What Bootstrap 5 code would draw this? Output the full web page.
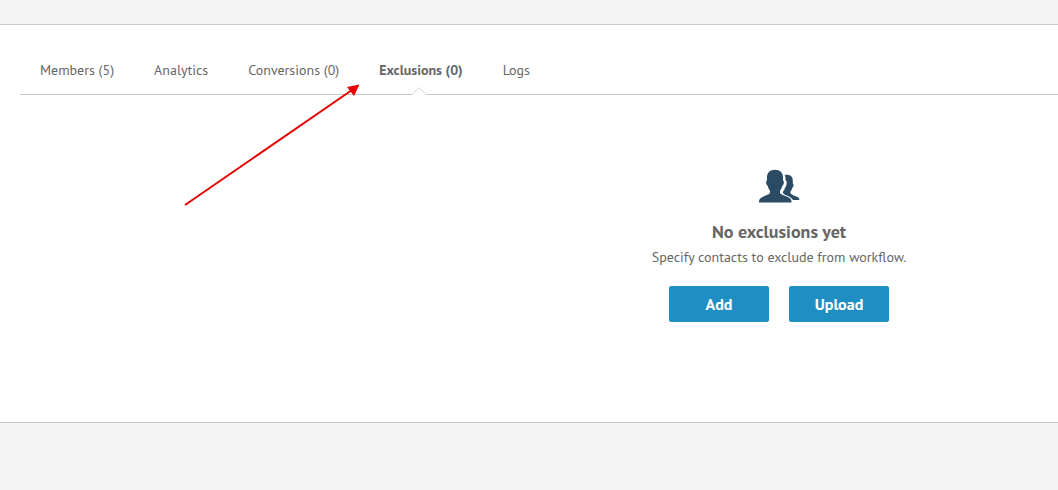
<!DOCTYPE html>
<html lang="en">
<head>
<meta charset="utf-8">
<meta name="viewport" content="width=device-width, initial-scale=1">
<title>Workflow exclusions</title>
<link href="https://cdn.jsdelivr.net/npm/bootstrap@5.3.0/dist/css/bootstrap.min.css" rel="stylesheet">
<style>
  body { background: #f3f3f3; color: #666; font: 14px/20px "PT Sans", "Noto Sans", sans-serif; overflow-x: hidden; }
  .sheet { margin-top: 24px; border-top: 1px solid #c8c8c8; border-bottom: 1px solid #c8c8c8; padding: 35px 0 100px 20px; }
  .tabs { border-bottom: 1px solid #c8c8c8; padding: 0 20px; column-gap: 40px; }
  .tabs .nav-link { color: #666; font-size: 14px; padding: 0 0 14px; }
  .tabs .nav-link.active { font-weight: 700; position: relative; }
  .caret { position: absolute; left: 50%; bottom: -1px; margin-left: -10px; }
  .empty { padding: 74px 0 0 calc(50% - 39px); }
  .empty h1 { font-size: 18px; line-height: 24px; font-weight: 700; margin: 17px 0 3px; }
  .empty p { margin: 0 0 19px; }
  .action { --bs-btn-bg: #1f8fc3; --bs-btn-border-color: #1f8fc3; --bs-btn-hover-bg: #1a7dab; --bs-btn-font-weight: 700; --bs-btn-font-size: 16px; --bs-btn-border-radius: 2px; width: 100px; height: 36px; padding: 0; }
  .actions { gap: 20px; }
  .pointer { position: absolute; left: 184px; top: 84px; pointer-events: none; }
</style>
</head>
<body>
<main class="sheet bg-white">
  <nav class="nav tabs" aria-label="Workflow">
    <a class="nav-link" href="#members">Members (5)</a>
    <a class="nav-link" href="#analytics">Analytics</a>
    <a class="nav-link" href="#conversions">Conversions (0)</a>
    <a class="nav-link active" href="#exclusions" aria-current="page">Exclusions (0)
      <svg class="caret" width="16" height="9" viewBox="0 0 16 9" aria-hidden="true"><path d="M1 9 8 1.500 15 9z" fill="#fff"/><path d="M1 8.500 8 1.500l7 7" fill="none" stroke="#d5d5d5"/></svg>
    </a>
    <a class="nav-link" href="#logs">Logs</a>
  </nav>
  <section class="empty text-center">
    <svg class="d-block mx-auto" width="42" height="34" viewBox="0 0 42 34" fill="#2b4a63" aria-hidden="true">
      <path d="M17 .8c5 0 8 3 8 7.700v3c.8.3 1 1.200.8 2.500-.3 1.500-.8 2.500-1.600 3C23.800 19 23 20.500 22 21.500v2.500c1 2 9.500 3.500 11 6.500.6 1.200.5 2 .5 3H1c0-1 0-2 .5-3C3 27.500 11 26 12 24v-2.500C11 20.500 10.200 19 9.800 17c-.8-.5-1.300-1.500-1.600-3-.2-1.300 0-2.200.8-2.500v-3C9 3.800 12 .8 17 .8z"/>
      <path d="M26.500 6c5-1 8.300 1.200 8.300 5.500v3c.7.3.9 1 .7 2-.2 1.300-.7 2-1.300 2.500-.2 1.200-.8 2.500-1.700 3.300v2c1 2 7 3 8.200 4.700.6.8.6 1.300.6 2H35c-1.500-3.200-7.500-4.500-9.800-6.500-.4-.8-.4-1.500 0-2.200 1-1 1.600-2.300 1.800-3.600 1.400-1.500 2-3.700 1.500-6.200-.2-.6-.5-1-1-1.500.1-2-.1-3.600-1-5z"/>
    </svg>
    <h1>No exclusions yet</h1>
    <p>Specify contacts to exclude from workflow.</p>
    <div class="actions d-flex justify-content-center">
      <button type="button" class="btn btn-primary action">Add</button>
      <button type="button" class="btn btn-primary action">Upload</button>
    </div>
  </section>
</main>
<svg class="pointer" width="176" height="122" viewBox="0 0 176 122" aria-hidden="true">
  <path d="M1 121 168 6" stroke="#e60000" stroke-width="2"/><path d="M175.500.500 163 3l7 9z" fill="#e60000"/>
</svg>
<script src="https://cdn.jsdelivr.net/npm/bootstrap@5.3.0/dist/js/bootstrap.bundle.min.js"></script>
</body>
</html>
